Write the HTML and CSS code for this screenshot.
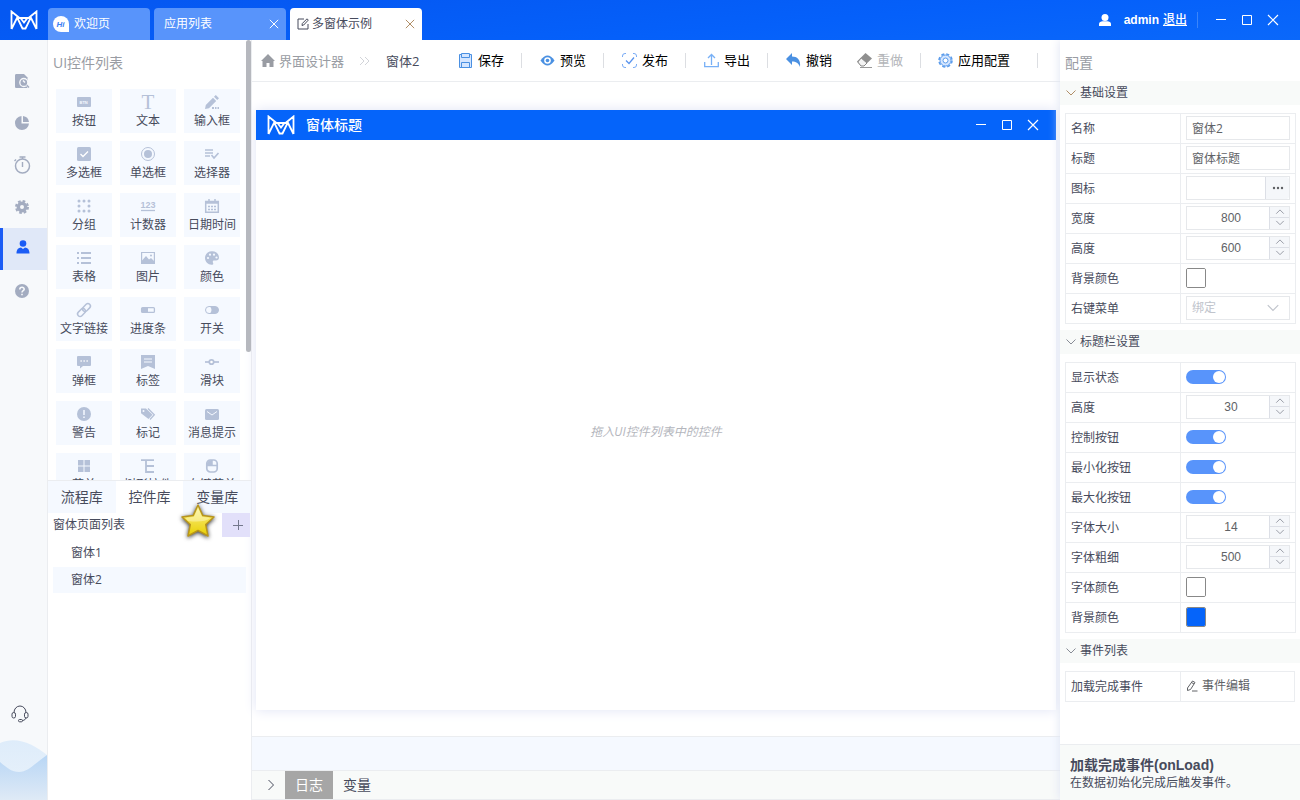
FILE: index.html
```html
<!DOCTYPE html>
<html lang="zh-CN">
<head>
<meta charset="utf-8">
<title>多窗体示例</title>
<link rel="stylesheet" href="styles.css">
</head>
<body>
<svg class="sprite" aria-hidden="true">
  <symbol id="logo" viewBox="0 0 28 20"><path d="M1.500 19V1.500L9.500 8H18.500L26.500 1.500V19M1.500 19L7.200 7.500L12.500 18.500H15.500L20.800 7.500L26.500 19M10.500 8L14 12.500L17.500 8" fill="none" stroke="currentColor" stroke-width="1.800"/></symbol>
  <symbol id="close" viewBox="0 0 12 12"><path d="M1 1l10 10M11 1L1 11" fill="none" stroke="currentColor" stroke-width="1.200"/></symbol>
  <symbol id="min" viewBox="0 0 12 12"><path d="M1 5.500h10" stroke="currentColor"/></symbol>
  <symbol id="max" viewBox="0 0 12 12"><path d="M1.500 1.500h9v9h-9z" fill="none" stroke="currentColor"/></symbol>
  <symbol id="down" viewBox="0 0 12 12"><path d="M1.500 3.500L6 8l4.500-4.500" fill="none" stroke="currentColor"/></symbol>
  <symbol id="up" viewBox="0 0 12 12"><path d="M1.500 8L6 3.500 10.500 8" fill="none" stroke="currentColor"/></symbol>
</svg>

<header class="topbar">
  <svg class="logo"><use href="#logo"/></svg>
  <nav class="tabs">
    <button class="tab tab-home"><svg class="i16" viewBox="0 0 16 16"><path d="M8 0a8 8 0 0 1 8 8v8H8A8 8 0 0 1 8 0z" fill="#fff"/><text x="3.500" y="11" class="hi-text">Hi</text></svg>欢迎页</button>
    <button class="tab"><span class="tab-label">应用列表</span><svg class="i10"><use href="#close"/></svg></button>
    <button class="tab tab-active"><svg class="i12" viewBox="0 0 12 12"><path d="M7 1H1v10h10V6M5 7.500L5.300 5.500 10 .8l1.300 1.300L6.700 7z" fill="none" stroke="currentColor"/></svg><span class="tab-label">多窗体示例</span><svg class="i10"><use href="#close"/></svg></button>
  </nav>
  <div class="user">
    <svg class="i14" viewBox="0 0 14 14"><circle cx="7" cy="4.500" r="3.500" fill="#fff"/><path d="M1 13v-2c0-2 2-2.800 3.500-2.800h5C11 8.200 13 9 13 11v2z" fill="#fff"/></svg>
    <span class="user-name">admin</span><a class="logout" href="#">退出</a>
  </div>
  <div class="wincontrols">
    <button aria-label="最小化"><svg class="i12"><use href="#min"/></svg></button>
    <button aria-label="最大化"><svg class="i12"><use href="#max"/></svg></button>
    <button aria-label="关闭"><svg class="i12"><use href="#close"/></svg></button>
  </div>
</header>

<div class="shell">
  <aside class="rail">
    <button class="rail-item" aria-label="查看"><svg class="i16" viewBox="0 0 16 16"><path d="M1 2.500C1 1.500 1.500 1 2.500 1H10l3.500 3.500V15H2.500C1.500 15 1 14.500 1 13.500z" fill="currentColor"/><circle cx="9.800" cy="9.500" r="4" fill="currentColor" stroke="#f7f9fb" stroke-width="1.300"/><path d="M9 7.500l2 2M12.600 12.400L15 15" stroke="#f7f9fb" stroke-width="1.500"/><path d="M12.800 12.300l2.200 2.200" stroke="currentColor" stroke-width="1.500"/></svg></button>
    <button class="rail-item" aria-label="统计"><svg class="i16" viewBox="0 0 16 16"><path d="M7.500 1v7.500H15A7 7 0 1 1 7.500 1z" fill="currentColor"/><path d="M9 1a7 7 0 0 1 6 6H9z" fill="currentColor"/></svg></button>
    <button class="rail-item" aria-label="定时"><svg class="i18" viewBox="0 0 18 18"><circle cx="9.500" cy="10" r="7" fill="none" stroke="currentColor" stroke-width="1.500"/><path d="M6.500 1h6M9.500 1v2M9.500 6v5M3 3.500L1.500 5" stroke="currentColor" stroke-width="1.400"/></svg></button>
    <button class="rail-item" aria-label="设置"><svg class="i16" viewBox="0 0 16 16"><circle cx="8" cy="8" r="3.700" fill="none" stroke="currentColor" stroke-width="3.400"/><circle cx="8" cy="8" r="6" fill="none" stroke="currentColor" stroke-width="2" stroke-dasharray="2.700 2"/></svg></button>
    <button class="rail-item rail-active" aria-label="用户"><svg class="i16" viewBox="0 0 16 16"><circle cx="8" cy="4.500" r="3.300" fill="currentColor"/><path d="M1.500 14.500c0-4 1.800-5.800 4.500-6l2 1.500 2-1.500c2.700.2 4.500 2 4.500 6z" fill="currentColor"/></svg></button>
    <button class="rail-item" aria-label="帮助"><svg class="i16" viewBox="0 0 16 16"><circle cx="8" cy="8" r="7" fill="currentColor"/><path d="M5.800 6.500C5.800 3.500 10.300 3.700 10.200 6.300 10.200 7.700 8 7.800 8 9.500M8 10.700v1.600" fill="none" stroke="#f7f9fb" stroke-width="1.600"/></svg></button>
    <button class="rail-support" aria-label="客服"><svg class="i18" viewBox="0 0 18 18" fill="none" stroke="currentColor"><path d="M3 7.500a6 6.500 0 0 1 12 0M15 12.500c-.5 2-1.500 2.800-3.500 3"/><rect x="1" y="7.500" width="3.500" height="5.500" rx="1.700"/><rect x="13.500" y="7.500" width="3.500" height="5.500" rx="1.700"/><rect x="7.500" y="14.500" width="4" height="2.300" rx="1.100"/></svg></button>
    <svg class="wave" viewBox="0 0 47 60" preserveAspectRatio="none" aria-hidden="true">
      <defs><linearGradient id="wg1" x1="0" y1="0" x2="0" y2="1"><stop offset="0" stop-color="#deecfa"/><stop offset="1" stop-color="#eaf3fb"/></linearGradient><linearGradient id="wg2" x1="0" y1="0" x2="0" y2="1"><stop offset="0" stop-color="#b8d6f5"/><stop offset="1" stop-color="#dfeaf6"/></linearGradient></defs>
      <path d="M0 3C17-4 33 4 47 15V60H0z" fill="url(#wg1)"/><path d="M0 22C7 28 12 32 19 32C28 32 34 24 47 15V60H0z" fill="url(#wg2)"/>
    </svg>
  </aside>

  <aside class="left">
    <section class="palette">
      <h2 class="panel-title">UI控件列表</h2>
      <div class="tiles">
        <button class="tile"><svg viewBox="0 0 14 14"><rect y="2" width="14" height="10" rx="1" fill="currentColor"/><text x="2.500" y="9" class="btn-text">BTN</text></svg>按钮</button>
        <button class="tile"><svg viewBox="0 0 14 14"><text x="7" y="14" class="t-text">T</text></svg>文本</button>
        <button class="tile"><svg viewBox="0 0 14 14"><path d="M0 14l.8-4L8 2.800l3.200 3.200L4 13.200zM9 1.800L10.800 0 14 3.200 12.200 5zM7 12h2v2H7zM10 12h1.500v2H10zM12.500 12H14v2h-1.500z" fill="currentColor"/></svg>输入框</button>
        <button class="tile"><svg viewBox="0 0 14 14"><rect width="14" height="14" rx="1.500" fill="currentColor"/><path d="M3.500 7l2.500 2.500 5-5" fill="none" stroke="#fff" stroke-width="1.300"/></svg>多选框</button>
        <button class="tile"><svg viewBox="0 0 14 14"><circle cx="7" cy="7" r="6.500" fill="none" stroke="currentColor"/><circle cx="7" cy="7" r="4" fill="currentColor"/></svg>单选框</button>
        <button class="tile"><svg viewBox="0 0 14 14"><path d="M0 3h8M0 6h8M0 9h5M6.500 8l2.500 3L13.500 6" fill="none" stroke="currentColor" stroke-width="1.700"/></svg>选择器</button>
        <button class="tile"><svg viewBox="0 0 14 14"><path d="M2 2h11M2 12h11M2 2v11M12 2v11" fill="none" stroke="currentColor" stroke-width="3" stroke-linecap="round" stroke-dasharray="0 5"/></svg>分组</button>
        <button class="tile"><svg viewBox="0 0 14 14"><text x="7" y="9" class="num-text">123</text><path d="M0 11.500h14" stroke="currentColor" stroke-width="1.300"/></svg>计数器</button>
        <button class="tile"><svg viewBox="0 0 14 14"><path d="M.7 2.500h12.600v10.800H.7zM.7 4h13M4 0v3M10 0v3" fill="none" stroke="currentColor" stroke-width="1.500"/><path d="M3 7.500h8.500M3 10.500h8.500" stroke="currentColor" stroke-width="1.700" stroke-dasharray="2 1"/></svg>日期时间</button>
        <button class="tile"><svg viewBox="0 0 14 14"><path d="M0 2h2M4 2h10M0 7h2M4 7h10M0 12h2M4 12h10" stroke="currentColor" stroke-width="2"/></svg>表格</button>
        <button class="tile"><svg viewBox="0 0 14 14"><path d="M.6 1.500h12.800v11H.6z" fill="none" stroke="currentColor" stroke-width="1.200"/><path d="M1 12V9.500L5 5l3 3.500 2-1.500 3 3v2z" fill="currentColor"/><circle cx="10" cy="4.500" r="1" fill="currentColor"/></svg>图片</button>
        <button class="tile"><svg viewBox="0 0 14 14"><path d="M7 .3C3 .3 0 3.300 0 7s3 6.700 6.500 6.700c2 0 2-1 1.500-2-.6-1.200 0-2.200 1.200-2.200H11c1.800 0 3-1.200 3-3C14 3 11 .3 7 .3z" fill="currentColor"/><g fill="#f5f9ff"><circle cx="3" cy="7" r="1.100"/><circle cx="5" cy="3.700" r="1.100"/><circle cx="9" cy="3.700" r="1.100"/><circle cx="11.500" cy="6.500" r="1.100"/></g></svg>颜色</button>
        <button class="tile"><svg viewBox="0 0 14 14"><g fill="none" stroke="currentColor" stroke-width="1.500" transform="rotate(-45 7 7)"><rect x="-1" y="4.500" width="9" height="5" rx="2.500"/><rect x="6" y="4.500" width="9" height="5" rx="2.500"/></g></svg>文字链接</button>
        <button class="tile"><svg viewBox="0 0 14 14"><rect x=".6" y="4.600" width="12.800" height="4.800" rx="1" fill="none" stroke="currentColor" stroke-width="1.300"/><path d="M1 5h6v4H1z" fill="currentColor"/></svg>进度条</button>
        <button class="tile"><svg viewBox="0 0 14 14"><rect x=".5" y="3.500" width="13" height="7" rx="3.500" fill="none" stroke="currentColor"/><path d="M5 3.500h5a3.500 3.500 0 0 1 0 7H5q3-3.500 0-7" fill="currentColor"/></svg>开关</button>
        <button class="tile"><svg viewBox="0 0 14 14"><path d="M0 2q0-1 1-1h12q1 0 1 1v8q0 1-1 1H6l-3 2.500V11H1q-1 0-1-1z" fill="currentColor"/><path d="M3.500 6h8" stroke="#fff" stroke-width="1.300" stroke-dasharray="1.300 1.700"/></svg>弹框</button>
        <button class="tile"><svg viewBox="0 0 14 14"><path d="M0 0h14v14l-7-3-7 3z" fill="currentColor"/><path d="M3 4h8M3 7h8" stroke="#f5f9ff"/></svg>标签</button>
        <button class="tile"><svg viewBox="0 0 14 14"><path d="M0 7h14" stroke="currentColor" stroke-width="1.700"/><circle cx="6.500" cy="7" r="2.200" fill="#fff" stroke="currentColor" stroke-width="1.800"/></svg>滑块</button>
        <button class="tile"><svg viewBox="0 0 14 14"><circle cx="7" cy="7" r="7" fill="currentColor"/><path d="M7 3v5M7 9.500V11" stroke="#f5f9ff" stroke-width="1.500"/></svg>警告</button>
        <button class="tile"><svg viewBox="0 0 14 14"><path d="M0 1.500h5l6.500 6.300L7.500 12 0 6.200z" fill="currentColor"/><circle cx="2.500" cy="4" r="1" fill="#f5f9ff"/><path d="M7 1.500l6.300 6.300L9 12.500" fill="none" stroke="currentColor" stroke-width="1.300"/></svg>标记</button>
        <button class="tile"><svg viewBox="0 0 14 14"><rect y="2" width="14" height="11" rx="1.500" fill="currentColor"/><path d="M2 4.500l5 3.500 5-3.500" fill="none" stroke="#f5f9ff"/></svg>消息提示</button>
        <button class="tile"><svg viewBox="0 0 14 14"><path d="M1 1h5.500v5.500H1zM7.500 1H13v5.500H7.500zM1 7.500h5.500V13H1zM7.500 7.500H13V13H7.500z" fill="currentColor"/></svg>菜单</button>
        <button class="tile"><svg viewBox="0 0 14 14"><path d="M0 1.200h13M5 1v12h8M5 7h8" fill="none" stroke="currentColor" stroke-width="1.800"/></svg>树形控件</button>
        <button class="tile"><svg viewBox="0 0 14 14"><rect x="1.800" y="1" width="10.400" height="12" rx="3.500" fill="none" stroke="currentColor" stroke-width="1.700"/><path d="M2 6.500h10M7 1v5.500" stroke="currentColor" stroke-width="1.500"/><path d="M2 6.500V4q1-3 5-3v5.500z" fill="currentColor"/></svg>右键菜单</button>
      </div>
      <div class="scroll-thumb"></div>
    </section>
    <section class="library">
      <nav class="lib-tabs"><button>流程库</button><button class="lib-active">控件库</button><button>变量库</button></nav>
      <div class="lib-head"><span>窗体页面列表</span><button class="add" aria-label="添加"><svg class="i12" viewBox="0 0 12 12"><path d="M1 6.500h10M6.500 1v10" stroke="currentColor"/></svg></button></div>
      <ul class="forms"><li>窗体1</li><li class="form-active">窗体2</li></ul>
      <svg class="star" viewBox="0 0 38 38" aria-hidden="true"><defs><linearGradient id="sg" x1="0" y1="0" x2="0" y2="1"><stop offset="0" stop-color="#fbf6a0"/><stop offset=".5" stop-color="#f3e04a"/><stop offset="1" stop-color="#e8d000"/></linearGradient></defs><path d="M19 3l4.800 10.600L35 15l-8.300 7.600L29 34l-10-5.500L9 34l2.300-11.400L3 15l11.200-1.400z" fill="url(#sg)" stroke="#b8951c" stroke-width="1.500" stroke-linejoin="round"/><path d="M19 6.500l4 8.300 8.500 1.200Q25 21 9 19L6.500 16l8.500-1.200z" fill="#fffbd0" opacity=".45"/></svg>
    </section>
  </aside>

  <main class="main">
    <div class="toolbar">
      <nav class="crumbs">
        <svg class="i14" viewBox="0 0 14 14"><path d="M7 0l7 7h-1.500v6H8.500V9h-3v4h-4V7H0z" fill="currentColor"/></svg><a href="#" class="crumb">界面设计器</a>
        <svg class="i12 crumb-sep" viewBox="0 0 12 12"><path d="M1 2l4 4-4 4M6 2l4 4-4 4" fill="none" stroke="currentColor"/></svg><span>窗体2</span>
      </nav>
      <div class="actions">
        <button class="act"><svg viewBox="0 0 15 15" fill="none" stroke="#4a90e2"><path d="M1.500 1.500h12v13h-12z" fill="#d5e6ff"/><path d="M3.500.5h8v4h-8zM3.500 14V9.500h8V14" fill="#d5e6ff"/></svg>保存</button>
        <button class="act"><svg viewBox="0 0 15 15"><path d="M.5 7.500Q7.500-2.500 14.500 7.500 7.500 17.500.5 7.500z" fill="#4a90e2"/><circle cx="7.500" cy="7.500" r="3.300" fill="#fff"/><circle cx="7.500" cy="7.500" r="1.800" fill="#4a90e2"/></svg>预览</button>
        <button class="act"><svg viewBox="0 0 15 15" fill="none" stroke="#7aacf5"><path d="M.5 4V3Q.5.500 3 .5h1M11 .5h1q2.500 0 2.500 2.500v1M14.500 11v1q0 2.500-2.500 2.500h-1M4 14.500H3Q.5 14.500.5 12v-1"/><path d="M4 7.500L7 10.500l5-6" stroke="#5a94ee" stroke-width="1.300"/></svg>发布</button>
        <button class="act"><svg viewBox="0 0 15 15" fill="none" stroke="#78b0f6" stroke-width="1.300"><path d="M7.500 12V1.500M4 5l3.500-3.500L11 5M.7 9v4.700h13.600V9"/></svg>导出</button>
        <button class="act act-open"><svg viewBox="0 0 15 15"><path d="M6 0v3.500c5 0 9 3 8 10.500-1.500-4-4-5.500-8-5.500V12L0 6z" fill="#4a90e2"/></svg>撤销</button>
        <button class="act act-disabled"><svg viewBox="0 0 15 15"><path d="M0 8.500L8.500 0 15 5.500 7 13H4z" fill="#8f8f8f"/><path d="M4.200 5l5.800 5-3 3H4L.8 9z" fill="#f4f4f4" stroke="#888"/><path d="M3 14.500h12" stroke="#999"/></svg>重做</button>
        <button class="act act-last"><svg viewBox="0 0 15 15" fill="none" stroke="#5b9cec"><circle cx="7.500" cy="7.500" r="6.500" stroke-width="1.600" stroke-dasharray="3.100 2"/><circle cx="7.500" cy="7.500" r="5.500" fill="#d5e6ff"/><circle cx="7.500" cy="7.500" r="2.500" fill="#fff"/></svg>应用配置</button>
      </div>
    </div>
    <div class="canvas">
      <div class="window">
        <div class="window-bar"><svg class="logo"><use href="#logo"/></svg><span class="window-title">窗体标题</span>
          <div class="wincontrols"><button aria-label="最小化"><svg class="i12"><use href="#min"/></svg></button><button aria-label="最大化"><svg class="i12"><use href="#max"/></svg></button><button aria-label="关闭"><svg class="i12"><use href="#close"/></svg></button></div>
        </div>
        <div class="window-body">拖入UI控件列表中的控件</div>
      </div>
    </div>
    <div class="strip"></div>
    <div class="console"><button class="expand" aria-label="展开"><svg class="i12" viewBox="0 0 12 12"><path d="M3.500 1l5 5-5 5" fill="none" stroke="currentColor"/></svg></button><button class="con-tab con-active">日志</button><button class="con-tab">变量</button></div>
  </main>

  <aside class="config">
    <h2 class="panel-title">配置</h2>
    <button class="group group-open"><svg class="i12"><use href="#down"/></svg>基础设置</button>
    <table class="props">
      <tr><th><label for="name">名称</label></th><td><input id="name" class="field" type="text" value="窗体2"></td></tr>
      <tr><th><label for="title">标题</label></th><td><input id="title" class="field" type="text" value="窗体标题"></td></tr>
      <tr><th><label for="icon">图标</label></th><td><div class="picker"><input id="icon" type="text"><button aria-label="选择"><svg class="i12" viewBox="0 0 12 12"><path d="M2 6h.01M6 6h.01M10 6h.01" stroke="currentColor" stroke-width="2.400" stroke-linecap="round"/></svg></button></div></td></tr>
      <tr><th><label for="w">宽度</label></th><td><div class="number"><input id="w" type="number" value="800"><button class="inc" aria-label="增加"><svg><use href="#up"/></svg></button><button class="dec" aria-label="减少"><svg><use href="#down"/></svg></button></div></td></tr>
      <tr><th><label for="h">高度</label></th><td><div class="number"><input id="h" type="number" value="600"><button class="inc" aria-label="增加"><svg><use href="#up"/></svg></button><button class="dec" aria-label="减少"><svg><use href="#down"/></svg></button></div></td></tr>
      <tr><th><label for="bg">背景颜色</label></th><td><input id="bg" class="swatch" type="color" value="#ffffff"></td></tr>
      <tr><th><label for="menu">右键菜单</label></th><td><div class="select"><select id="menu" disabled><option>绑定</option></select><svg class="i14"><use href="#down"/></svg></div></td></tr>
    </table>
    <button class="group"><svg class="i12"><use href="#down"/></svg>标题栏设置</button>
    <table class="props">
      <tr><th><label for="show">显示状态</label></th><td><input id="show" class="switch" type="checkbox" checked></td></tr>
      <tr><th><label for="bh">高度</label></th><td><div class="number"><input id="bh" type="number" value="30"><button class="inc" aria-label="增加"><svg><use href="#up"/></svg></button><button class="dec" aria-label="减少"><svg><use href="#down"/></svg></button></div></td></tr>
      <tr><th><label for="ctl">控制按钮</label></th><td><input id="ctl" class="switch" type="checkbox" checked></td></tr>
      <tr><th><label for="mi">最小化按钮</label></th><td><input id="mi" class="switch" type="checkbox" checked></td></tr>
      <tr><th><label for="ma">最大化按钮</label></th><td><input id="ma" class="switch" type="checkbox" checked></td></tr>
      <tr><th><label for="fs">字体大小</label></th><td><div class="number"><input id="fs" type="number" value="14"><button class="inc" aria-label="增加"><svg><use href="#up"/></svg></button><button class="dec" aria-label="减少"><svg><use href="#down"/></svg></button></div></td></tr>
      <tr><th><label for="fw">字体粗细</label></th><td><div class="number"><input id="fw" type="number" value="500"><button class="inc" aria-label="增加"><svg><use href="#up"/></svg></button><button class="dec" aria-label="减少"><svg><use href="#down"/></svg></button></div></td></tr>
      <tr><th><label for="fc">字体颜色</label></th><td><input id="fc" class="swatch" type="color" value="#ffffff"></td></tr>
      <tr><th><label for="bc">背景颜色</label></th><td><input id="bc" class="swatch" type="color" value="#0564fa"></td></tr>
    </table>
    <button class="group"><svg class="i12"><use href="#down"/></svg>事件列表</button>
    <table class="props">
      <tr><th>加载完成事件</th><td><button class="edit"><svg class="i12" viewBox="0 0 12 12"><path d="M1.500 10.500L1.500 8 6.500 1l2.500 1.500L4.500 9.500zM6 11h5.500M5.500 2.500L8 4" fill="none" stroke="currentColor"/></svg>事件编辑</button></td></tr>
    </table>
    <div class="hint"><strong>加载完成事件(onLoad)</strong><p>在数据初始化完成后触发事件。</p></div>
  </aside>
</div>
</body>
</html>
```

FILE: styles.css
```css
* { box-sizing: border-box; }
body {
  margin: 0;
  height: 100vh;
  display: flex;
  flex-direction: column;
  overflow: hidden;
  font: 12px/18px "Open Sans", "Noto Sans CJK SC", sans-serif;
  color: #474b5c;
  background: #fff;
}
button, input, select { font: inherit; color: inherit; margin: 0; padding: 0; border: 0; background: none; outline: 0; }
button { display: flex; align-items: center; justify-content: center; }
svg { flex: none; display: block; }
h2, p, ul { margin: 0; padding: 0; font-weight: 400; list-style: none; }
.sprite { display: none; }
.i10 { width: 10px; height: 10px; }
.i12 { width: 12px; height: 12px; }
.i14 { width: 14px; height: 14px; }
.i16 { width: 16px; height: 16px; }
.i18 { width: 18px; height: 18px; }
.logo { width: 28px; height: 20px; color: #fff; }

/* top bar */
.topbar {
  position: relative;
  z-index: 1;
  flex: 0 0 40px;
  display: flex;
  align-items: center;
  padding: 0 14px 0 10px;
  background: linear-gradient(175deg, #0558f2 10%, #0560fa 60%, #0a68fa);
  color: #fff;
}
.tabs { display: flex; gap: 4px; align-self: flex-end; margin-left: 10px; }
.tab { width: 132px; height: 32px; padding: 0 7px 0 10px; border-radius: 4px 4px 0 0; background: #5894fb; justify-content: flex-start; }
.tab-home { width: 102px; padding-left: 5px; gap: 5px; }
.tab-label { flex: 1; text-align: left; }
.tab-active { background: #fff; color: #474b5c; padding-left: 7px; gap: 3px; }
.tab-active .i10 { color: #b08d66; }
.hi-text { font: italic bold 8px "Liberation Sans", sans-serif; fill: #3a7ef5; }
.user { display: flex; align-items: center; margin-left: auto; padding-right: 10px; border-right: 1px solid #3b85fb; height: 16px; font-weight: 700; }
.user-name { margin: 0 4px 0 12px; font-family: "Liberation Sans", sans-serif; }
.logout { color: #fff; font-weight: 500; }
.wincontrols { display: flex; }
.wincontrols button { width: 26px; height: 26px; color: #fff; }
.topbar .wincontrols { margin-left: 10px; }

.shell { flex: 1; min-height: 0; display: grid; grid-template-columns: 48px 204px minmax(0, 1fr) 240px; }

/* icon rail */
.rail { display: flex; flex-direction: column; padding-top: 20px; background: #f7f9fb; border-right: 1px solid #ebedf0; }
.rail-item { height: 42px; padding-right: 3px; color: #a3acc0; }
.rail-active { background: #e0e8f8; color: #1b5cf5; box-shadow: inset 3px 0 #1b5cf5; padding: 0 1px 4px 0; }
.rail-support { margin-top: auto; margin-bottom: 17px; padding-right: 7px; color: #474b5c; }
.wave { width: 100%; height: 60px; }

/* control palette */
.left { display: grid; grid-template-rows: 11fr 8fr; border-right: 1px solid #ebedf0; min-height: 0; }
.palette { position: relative; overflow: hidden; }
.panel-title { font-size: 14px; line-height: 20px; padding: 13px 5px 8px; color: #999ca3; }
.tiles { display: grid; grid-template-columns: repeat(3, 56px); gap: 8px; padding: 8px; }
.tile { flex-direction: column; justify-content: flex-start; height: 44px; padding-top: 6px; gap: 3px; background: #f5f9ff; white-space: nowrap; }
.tile svg { width: 14px; height: 14px; color: #b5c1d8; overflow: visible; }
.btn-text { font: bold 4px "Liberation Sans", sans-serif; fill: #f5f9ff; }
.t-text { font: 21px "Liberation Serif", serif; fill: currentColor; text-anchor: middle; }
.num-text { font: bold 9px "Liberation Sans", sans-serif; fill: currentColor; text-anchor: middle; }
.scroll-thumb { position: absolute; top: 0; right: 0; width: 5px; height: 71%; border-radius: 3px; background: #b6b8be; }

/* library */
.library { position: relative; border-top: 1px solid #ebedf0; }
.lib-tabs { display: flex; height: 32px; font-size: 14px; }
.lib-tabs button { flex: 1; background: #f5f9ff; }
.lib-tabs .lib-active { background: #fff; }
.lib-head { display: flex; align-items: center; justify-content: space-between; height: 24px; padding: 0 1px 0 5px; }
.add { width: 28px; height: 24px; padding-left: 4px; background: #e2e0fa; color: #74788c; }
.forms { padding: 3px 5px; display: grid; gap: 1px; }
.forms li { height: 26px; line-height: 26px; padding-left: 18px; }
.form-active { background: #f5f9ff; }
.star { position: absolute; left: 131px; top: 21px; width: 38px; height: 38px; filter: drop-shadow(0 1px 2px rgba(0, 0, 0, .8)); }

/* designer */
.main { display: flex; flex-direction: column; min-height: 0; }
.toolbar { flex: 0 0 42px; display: flex; align-items: center; border-bottom: 1px solid #ebedf0; font-size: 13px; white-space: nowrap; }
.crumbs { display: flex; align-items: center; width: 188px; padding-left: 9px; color: #474b5c; }
.crumbs .i14, .crumb { color: #999ca3; }
.crumb { margin-left: 4px; text-decoration: none; }
.crumb-sep { margin: 0 15px; color: #d2d4d9; }
.actions { display: flex; color: #000; }
.act { gap: 5px; padding: 0 17px 0 18px; line-height: 15px; border-right: 1px solid #dcdee2; }
.act svg { width: 15px; height: 15px; }
.act-open { border: 0; padding-right: 7px; }
.act-disabled { color: #b4b6ba; }
.act-last { padding-right: 27px; padding-left: 17px; }
.canvas { flex: 1; min-height: 0; display: flex; padding: 28px 4px 26px; }
.window { flex: 1; display: flex; flex-direction: column; background: #fff; box-shadow: 0 0 12px #dfe3f5; }
.window-bar { flex: 0 0 30px; display: flex; align-items: center; padding: 0 10px 0 11px; gap: 11px; background: #0564fa; color: #fff; font-size: 14px; font-weight: 500; }
.window-bar .wincontrols { margin-left: auto; }
.window-body { flex: 1; display: flex; align-items: center; justify-content: center; padding-top: 14px; color: #b4b6bd; font-style: italic; }
.strip { flex: 0 0 34px; background: #f5f9ff; border-top: 1px solid #ebedf0; }
.console { flex: 0 0 30px; display: flex; background: #f8faf9; border: solid #ebedf0; border-width: 1px 0; font-size: 14px; }
.expand { width: 33px; padding-left: 5px; }
.con-tab { width: 48px; }
.con-active { background: #a6a6a6; color: #fff; }

/* configuration */
.config { display: flex; flex-direction: column; min-height: 0; background: #fff; box-shadow: 0 0 10px #dde2f3; }
.group { flex: 0 0 24px; justify-content: flex-start; gap: 3px; padding-left: 5px; background: #f8faf9; }
.group .i12 { color: #888c96; }
.group-open .i12 { color: #b08d66; }
.props { margin: 8px 5px 6px; border-collapse: collapse; }
.props th, .props td { border: 1px solid #ebedf0; height: 30px; text-align: left; font-weight: 400; }
.props th { width: 50%; min-width: 115px; padding: 1px 5px 0; white-space: nowrap; }
.props td { width: 50%; padding: 0 5px 2px; }
.field, .picker, .number, .select { display: flex; width: 104px; height: 24px; border: 1px solid #e6e8eb; color: #606266; }
.field { padding: 0 5px; }
.picker input { flex: 1; min-width: 0; }
.picker button { width: 24px; background: #f5f7fa; border-left: 1px solid #dcdfe6; border-radius: 0 3px 3px 0; }
.number { display: grid; grid-template-columns: minmax(0, 1fr) 20px; grid-template-rows: 11px 11px; }
.number input { grid-row: 1 / 3; padding-left: 6px; text-align: center; appearance: textfield; font-family: "Liberation Sans", sans-serif; }
.number input::-webkit-inner-spin-button { appearance: none; }
.number button { background: #f5f7fa; border-left: 1px solid #dcdfe6; color: #888c96; }
.number .inc { border-bottom: 1px solid #dcdfe6; }
.number svg { width: 10px; height: 10px; }
.select { align-items: center; padding: 0 9px 0 5px; color: #c0c4cc; }
.select select { flex: 1; appearance: none; opacity: 1; }
.swatch { display: block; appearance: none; width: 20px; height: 20px; border: 1px solid #888; border-radius: 2px; }
.swatch::-webkit-color-swatch-wrapper { padding: 0; }
.swatch::-webkit-color-swatch { border: 0; }
.switch { display: block; appearance: none; width: 40px; height: 14px; border-radius: 7px; background: #5894fb; }
.switch::after { content: ""; display: block; width: 12px; height: 12px; margin: 1px 1px 1px auto; border-radius: 50%; background: #fff; }
.edit { gap: 4px; color: #606266; }
.hint { margin-top: auto; height: 56px; padding: 10px; border-top: 1px solid #ebedf0; background: #f8faf9; }
.hint strong { display: block; font-size: 13px; line-height: 20px; font-family: "Liberation Sans", "Noto Sans CJK SC", sans-serif; font-size: 14px; white-space: nowrap; }
.hint p { line-height: 16px; }
```
